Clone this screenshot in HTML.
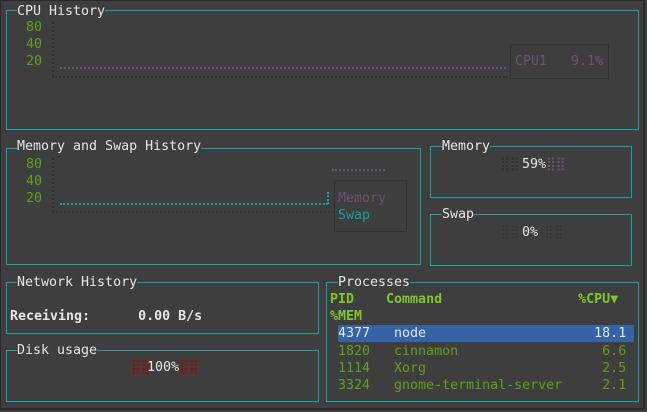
<!DOCTYPE html><html><head><style>
body{margin:0;width:647px;height:412px;background:#3e3e3e;overflow:hidden;position:relative;font-family:"DejaVu Sans Mono","Liberation Mono",monospace;font-size:13.3px;color:#e6e6e6}
.b{position:absolute;border:1px solid #17a2a8;box-sizing:border-box}
.t{position:absolute;line-height:17px;white-space:pre;background:#3e3e3e;margin-top:1px}
.x{position:absolute;line-height:17px;white-space:pre;margin-top:1px}
.g{color:#5fa11a}.p{color:#6e4e7a}.c{color:#19a0a0}
.dh{position:absolute;height:0;border-top:2px dotted}
.dv{position:absolute;width:0;border-left:2px dotted}
.bold{font-weight:bold}
</style></head><body>
<div style="position:absolute;left:0;top:0;width:645px;height:410px;border-top:1px solid #2a2a2a;border-left:1px solid #2a2a2a;border-right:2px solid #2a2a2a;border-bottom:2px solid #2a2a2a;box-sizing:border-box"></div>
<!-- CPU -->
<div class="b" style="left:6px;top:10px;width:633px;height:120px"></div>
<div class="t" style="left:17px;top:2px">CPU History</div>
<div class="x g" style="left:26px;top:18px">80</div>
<div class="x g" style="left:26px;top:35px">40</div>
<div class="x g" style="left:26px;top:52px">20</div>
<div class="dv" style="left:52px;top:22px;height:54px;border-color:#2f3333"></div>
<div class="dh" style="left:52px;top:76px;width:456px;border-color:#2f3333"></div>
<div class="dh" style="left:60px;top:67px;width:446px;border-color:#6e4e7a"></div>
<div style="position:absolute;left:510px;top:44px;width:99px;height:35px;border:1px solid #2e3333;box-sizing:border-box"></div>
<div class="x p" style="left:515px;top:52px">CPU1   9.1%</div>
<!-- Mem history -->
<div class="b" style="left:6px;top:148px;width:415px;height:117px"></div>
<div class="t" style="left:17px;top:137px">Memory and Swap History</div>
<div class="x g" style="left:26px;top:155px">80</div>
<div class="x g" style="left:26px;top:172px">40</div>
<div class="x g" style="left:26px;top:189px">20</div>
<div class="dv" style="left:52px;top:158px;height:54px;border-color:#2f3333"></div>
<div class="dh" style="left:52px;top:211px;width:282px;border-color:#2f3333"></div>
<div class="dh" style="left:60px;top:203px;width:268px;border-color:#19a0a0"></div>
<div class="dv" style="left:327px;top:192px;height:12px;border-color:#19a0a0"></div>
<div class="dh" style="left:332px;top:169px;width:53px;border-color:#6e4e7a"></div>
<div style="position:absolute;left:334px;top:180px;width:73px;height:52px;border:1px solid #2e3333;box-sizing:border-box"></div>
<div class="x p" style="left:338px;top:189px">Memory</div>
<div class="x c" style="left:338px;top:206px">Swap</div>
<!-- Memory gauge -->
<div class="b" style="left:430px;top:146px;width:202px;height:52px"></div>
<div class="t" style="left:442px;top:137px">Memory</div>
<div class="x" style="left:500px;top:155px;color:#2f3333">⣿⣿</div>
<div class="x" style="left:522px;top:155px">59%</div>
<div class="x p" style="left:546px;top:155px">⣿⣿</div>
<div class="b" style="left:430px;top:214px;width:202px;height:52px"></div>
<div class="t" style="left:442px;top:205px">Swap</div>
<div class="x" style="left:500px;top:223px;color:#2f3333">⣿⣿</div>
<div class="x" style="left:522px;top:223px">0%</div>
<div class="x" style="left:544px;top:223px;color:#2f3333">⣿⣿</div>
<!-- Network -->
<div class="b" style="left:6px;top:282px;width:313px;height:52px"></div>
<div class="t" style="left:17px;top:273px">Network History</div>
<div class="x bold" style="left:10px;top:307px">Receiving:      0.00 B/s</div>
<!-- Disk -->
<div class="b" style="left:6px;top:350px;width:313px;height:52px"></div>
<div class="t" style="left:17px;top:341px">Disk usage</div>
<div class="x" style="left:131px;top:358px;color:#b00000">⣿⣿</div>
<div class="x" style="left:147px;top:358px">100%</div>
<div class="x" style="left:179px;top:358px;color:#b00000">⣿⣿</div>
<!-- Processes -->
<div class="b" style="left:326px;top:282px;width:313px;height:120px"></div>
<div class="t" style="left:338px;top:273px">Processes</div>
<div class="x bold g" style="left:330px;top:290px;color:#7ec82a">PID    Command                 %CPU▼</div>
<div class="x bold" style="left:330px;top:307px;color:#7ec82a">%MEM</div>
<div style="position:absolute;left:338px;top:325px;width:296px;height:17px;background:#3563a5"></div>
<div class="x" style="left:338px;top:324px">4377   node                     18.1</div>
<div class="x g" style="left:338px;top:342px">1820   cinnamon                  6.6</div>
<div class="x g" style="left:338px;top:359px">1114   Xorg                      2.5</div>
<div class="x g" style="left:338px;top:376px">3324   gnome-terminal-server     2.1</div>
</body></html>
